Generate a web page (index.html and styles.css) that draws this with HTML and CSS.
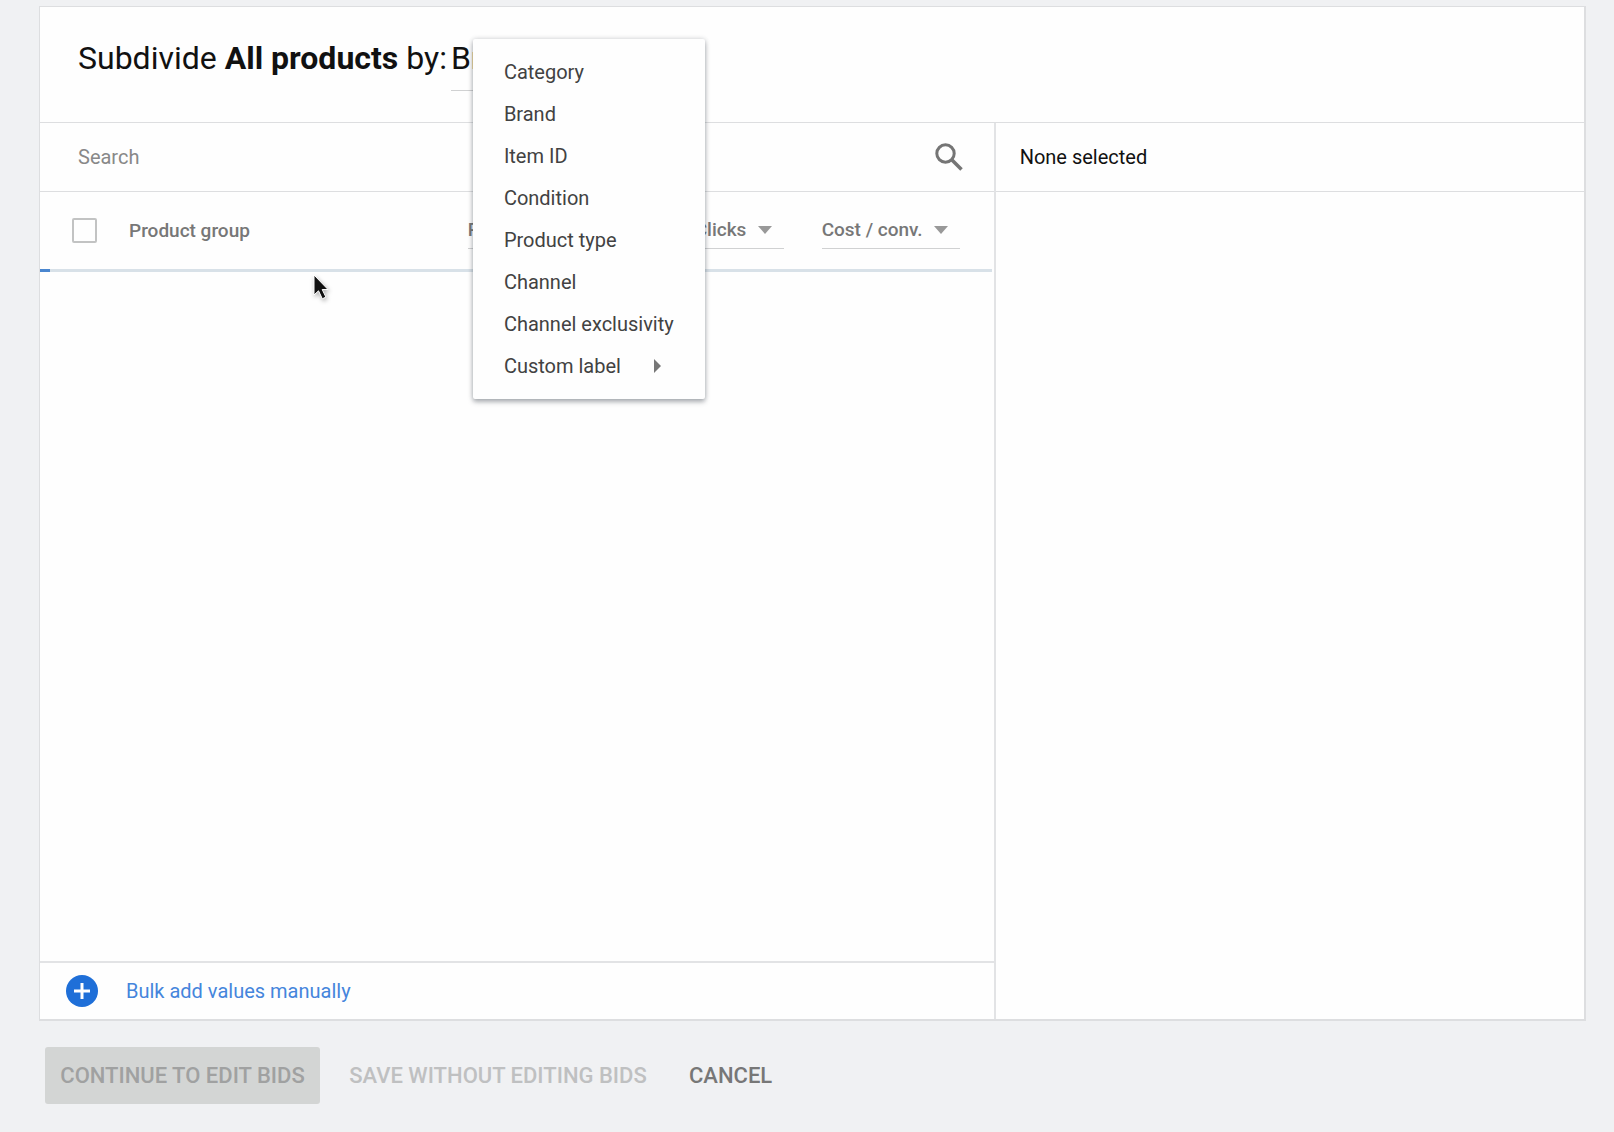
FILE: index.html
```html
<!DOCTYPE html>
<html lang="en">
<head>
<meta charset="utf-8">
<meta name="viewport" content="width=device-width, initial-scale=1">
<title>Subdivide All products</title>
<link rel="stylesheet" href="styles.css">
</head>
<body>
<main class="page">
  <section class="panel">
    <header class="panel-header">
      <h1 class="title">Subdivide <strong>All products</strong> by:</h1>
      <div class="dimension">
        <button class="dimension-button" type="button" aria-haspopup="menu" aria-expanded="true">Brand</button>
        <ul class="menu" role="menu">
          <li role="none"><button class="menu-item" type="button" role="menuitem">Category</button></li>
          <li role="none"><button class="menu-item" type="button" role="menuitem">Brand</button></li>
          <li role="none"><button class="menu-item" type="button" role="menuitem">Item ID</button></li>
          <li role="none"><button class="menu-item" type="button" role="menuitem">Condition</button></li>
          <li role="none"><button class="menu-item" type="button" role="menuitem">Product type</button></li>
          <li role="none"><button class="menu-item" type="button" role="menuitem">Channel</button></li>
          <li role="none"><button class="menu-item" type="button" role="menuitem">Channel exclusivity</button></li>
          <li role="none"><button class="menu-item" type="button" role="menuitem" aria-haspopup="menu">Custom label
            <svg class="submenu-arrow" width="7" height="14" viewBox="0 0 7 14" aria-hidden="true"><path d="M0 0l7 7-7 7z" fill="currentColor"/></svg></button></li>
        </ul>
      </div>
    </header>
    <div class="columns">
      <div class="picker">
        <div class="search">
          <input class="search-input" type="text" placeholder="Search" aria-label="Search">
          <button class="search-button" type="button" aria-label="Search">
            <svg width="28" height="28" viewBox="0 0 28 28" fill="none" stroke="currentColor" aria-hidden="true"><circle cx="10.500" cy="10.500" r="8.700" stroke-width="3"/><path d="M17 17l9.500 9.500" stroke-width="3.600"/></svg>
          </button>
        </div>
        <table class="groups">
          <thead>
            <tr>
              <th class="check-cell"><input class="check" type="checkbox" aria-label="Select all product groups"></th>
              <th class="name-cell">Product group</th>
              <th class="metric-cell metric-wide"><span class="metric"><select class="metric-select" aria-label="First metric"><option>Products</option></select><svg class="metric-arrow" width="14" height="8" viewBox="0 0 14 8" aria-hidden="true"><path d="M0 0h14L7 8z" fill="currentColor"/></svg></span></th>
              <th class="metric-cell"><span class="metric"><select class="metric-select" aria-label="Second metric"><option>Clicks</option></select><svg class="metric-arrow" width="14" height="8" viewBox="0 0 14 8" aria-hidden="true"><path d="M0 0h14L7 8z" fill="currentColor"/></svg></span></th>
              <th class="metric-cell"><span class="metric"><select class="metric-select" aria-label="Third metric"><option>Cost / conv.</option></select><svg class="metric-arrow" width="14" height="8" viewBox="0 0 14 8" aria-hidden="true"><path d="M0 0h14L7 8z" fill="currentColor"/></svg></span></th>
            </tr>
          </thead>
        </table>
        <div class="progress" role="progressbar" aria-label="Loading product groups"><div class="progress-value" style="width: 1%"></div></div>
        <div class="results"></div>
        <button class="bulk" type="button">
          <svg width="32" height="32" viewBox="0 0 32 32" aria-hidden="true"><circle cx="16" cy="16" r="16" fill="#1f6fd8"/><path d="M16 8v16M8 16h16" stroke="#fff" stroke-width="3"/></svg>
          <span>Bulk add values manually</span>
        </button>
      </div>
      <aside class="selection">
        <h2 class="selection-title">None selected</h2>
      </aside>
    </div>
  </section>
  <footer class="actions">
    <button class="action action-primary" type="button" disabled>CONTINUE TO EDIT BIDS</button>
    <button class="action action-save" type="button" disabled>SAVE WITHOUT EDITING BIDS</button>
    <button class="action" type="button">CANCEL</button>
  </footer>
  <svg class="pointer" width="18" height="28" viewBox="0 0 18 28" aria-hidden="true"><path d="M1 1v20l4.500-4.200 3.800 8 3.600-1.700-3.700-7.600H15z" fill="#111" stroke="#fff" stroke-width="1"/></svg>
</main>
</body>
</html>
```

FILE: styles.css
```css
*,
*::before,
*::after {
  box-sizing: border-box;
}

body {
  margin: 0;
  background: #f0f1f3;
  color: #111;
  font-family: Roboto, "Liberation Sans", sans-serif;
  font-size: 20px;
  line-height: 24px;
}

button,
input,
select {
  margin: 0;
  padding: 0;
  border: 0;
  background: none;
  color: inherit;
  font: inherit;
}

.page {
  position: relative;
  display: flex;
  flex-direction: column;
  min-height: 100vh;
  padding: 6px 28px 28px 39px;
}

.panel {
  flex: 1;
  display: flex;
  flex-direction: column;
  background: #fefefe;
  border: 2px solid #dddee0;
  border-width: 1px 2px 2px 1px;
}

.panel-header {
  display: flex;
  gap: 4px;
  height: 116px;
  padding: 24px 38px;
  border-bottom: 1px solid #dddee0;
}

.title {
  margin: 0;
  padding: 7px 0;
  font-size: 32px;
  font-weight: 400;
  line-height: 40px;
}

.title strong {
  font-weight: 700;
}

.dimension {
  position: relative;
}

.dimension-button {
  width: 160px;
  height: 60px;
  padding: 0 0 6px;
  border-bottom: 1px solid #d0d1d2;
  font-size: 32px;
  line-height: 40px;
  text-align: left;
}

.menu {
  position: absolute;
  top: 8px;
  left: 22px;
  z-index: 1;
  width: 232px;
  margin: 0;
  padding: 12px 0;
  list-style: none;
  background: #fefefe;
  border-radius: 2px;
  box-shadow: 0 3px 5px rgba(40, 50, 60, 0.35), 0 0 5px rgba(40, 50, 60, 0.2);
}

.menu-item {
  display: flex;
  align-items: center;
  gap: 33px;
  width: 100%;
  height: 42px;
  padding: 0 31px;
  color: #424242;
  text-align: left;
  white-space: nowrap;
}

.submenu-arrow {
  color: #777;
}

.columns {
  flex: 1;
  display: grid;
  grid-template-columns: 21fr 13fr;
}

.picker {
  display: flex;
  flex-direction: column;
}

.search {
  display: flex;
  align-items: center;
  height: 69px;
  padding: 0 31px 0 38px;
  border-bottom: 1px solid #dddee0;
}

.search-input {
  flex: 1;
  min-width: 0;
  outline: 0;
}

.search-input::placeholder {
  color: #888;
  opacity: 1;
}

.search-button {
  display: flex;
  color: #757575;
}

.groups {
  width: 100%;
  height: 77px;
  border-collapse: collapse;
  color: #777;
  font-size: 19px;
}

.groups th {
  padding: 0;
  font-weight: 500;
  text-align: left;
  vertical-align: middle;
}

.groups .check-cell {
  width: 89px;
  padding-left: 32px;
}

.check {
  display: block;
  width: 25px;
  height: 25px;
  border: 2px solid #c2c3c3;
  border-radius: 2px;
  appearance: none;
}

.groups .metric-cell {
  width: 1px;
  padding-right: 38px;
}

.groups .metric-cell:last-child {
  padding-right: 34px;
}

.metric {
  display: grid;
  align-items: center;
  border-bottom: 1px solid #d0d1d2;
}

.metric-wide .metric {
  width: 189px;
}

.metric-select,
.metric-arrow {
  grid-area: 1 / 1;
}

.metric-select {
  height: 36px;
  padding-right: 37px;
  appearance: none;
}

.metric-arrow {
  justify-self: end;
  margin-right: 12px;
  color: #999;
  pointer-events: none;
}

.progress {
  height: 3px;
  margin-right: 2px;
  background: #d8e1e8;
}

.progress-value {
  height: 100%;
  background: #4a86cf;
}

.results {
  flex: 1;
}

.bulk {
  display: flex;
  align-items: center;
  gap: 28px;
  height: 58px;
  padding: 0 26px;
  border-top: 2px solid #e2e3e5;
  color: #4585dc;
}

.selection {
  border-left: 2px solid #e2e3e5;
}

.selection-title {
  height: 69px;
  margin: 0;
  padding: 22px 24px;
  border-bottom: 1px solid #dddee0;
  font-size: 20px;
  font-weight: 400;
}

.actions {
  display: flex;
  gap: 13px;
  padding: 26px 6px 0;
}

.action {
  height: 57px;
  padding: 0 13px;
  border-radius: 3px;
  color: #777;
  font-size: 22px;
  font-weight: 500;
}

.action:disabled {
  color: #bfc0c1;
}

.action-primary {
  min-width: 275px;
}

.action-primary:disabled {
  background: #d3d5d4;
  color: #a0a1a1;
}

.action-save {
  min-width: 330px;
}

.pointer {
  position: absolute;
  top: 274px;
  left: 313px;
  filter: drop-shadow(1px 2px 2px rgba(0, 0, 0, 0.3));
}
```
